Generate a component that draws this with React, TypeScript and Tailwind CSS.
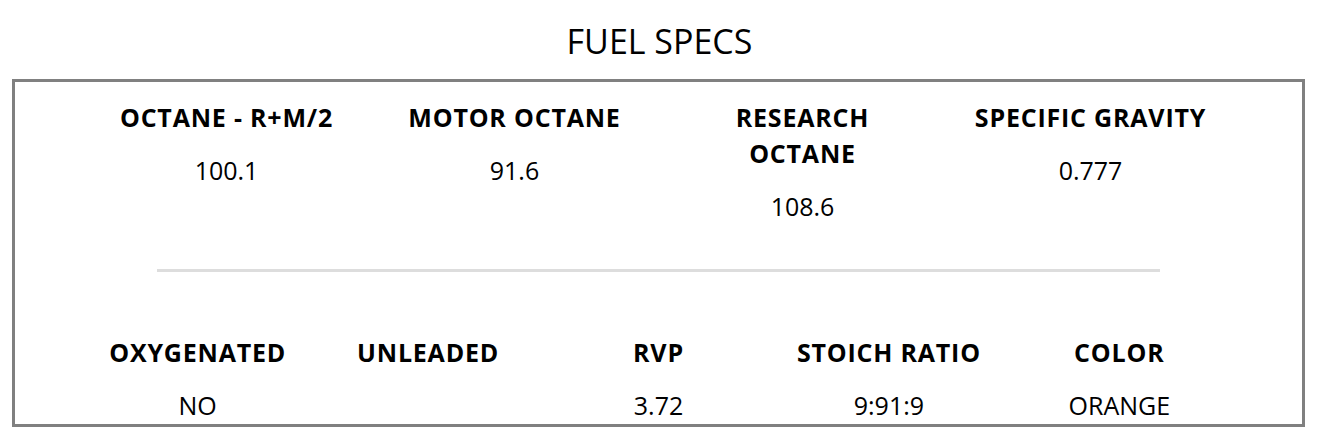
import React from "react";

interface Spec {
  label: string;
  value: string;
}

const topSpecs: Spec[] = [
  { label: "OCTANE - R+M/2", value: "100.1" },
  { label: "MOTOR OCTANE", value: "91.6" },
  { label: "RESEARCH OCTANE", value: "108.6" },
  { label: "SPECIFIC GRAVITY", value: "0.777" },
];

const bottomSpecs: Spec[] = [
  { label: "OXYGENATED", value: "NO" },
  { label: "UNLEADED", value: "" },
  { label: "RVP", value: "3.72" },
  { label: "STOICH RATIO", value: "9:91:9" },
  { label: "COLOR", value: "ORANGE" },
];

const SpecCell = ({ spec, wide }: { spec: Spec; wide?: boolean }) => (
  <div className={wide ? "px-[26px] text-center" : "px-[8px] text-center"}>
    <div className="text-[25px] leading-[36px] font-bold tracking-[0.8px]">
      {spec.label}
    </div>
    <div className="mt-[17px] min-h-[36px] text-[25px] leading-[36px]">
      {spec.value}
    </div>
  </div>
);

const App = () => {
  return (
    <div
      className="min-h-[442px] w-[1319px] bg-white pt-[17px] text-black"
      style={{ fontFamily: '"Open Sans", "Noto Sans", sans-serif' }}
    >
      <h2 className="mb-[14px] text-center text-[34px] leading-[48px]">
        FUEL SPECS
      </h2>

      {/* Specs box */}
      <div className="ml-[12px] h-[348px] w-[1293px] overflow-hidden border-[3px] border-[#808080] pt-[17px]">
        <div className="mx-auto grid w-[1152px] grid-cols-4">
          {topSpecs.map((spec) => (
            <SpecCell key={spec.label} spec={spec} wide />
          ))}
        </div>

        <div className="mx-auto mt-[45px] h-[3px] w-[1003px] bg-[#dddddd]"></div>

        <div className="mx-auto mt-[62px] grid w-[1152px] grid-cols-5">
          {bottomSpecs.map((spec) => (
            <SpecCell key={spec.label} spec={spec} />
          ))}
        </div>
      </div>
    </div>
  );
};

export default App;
